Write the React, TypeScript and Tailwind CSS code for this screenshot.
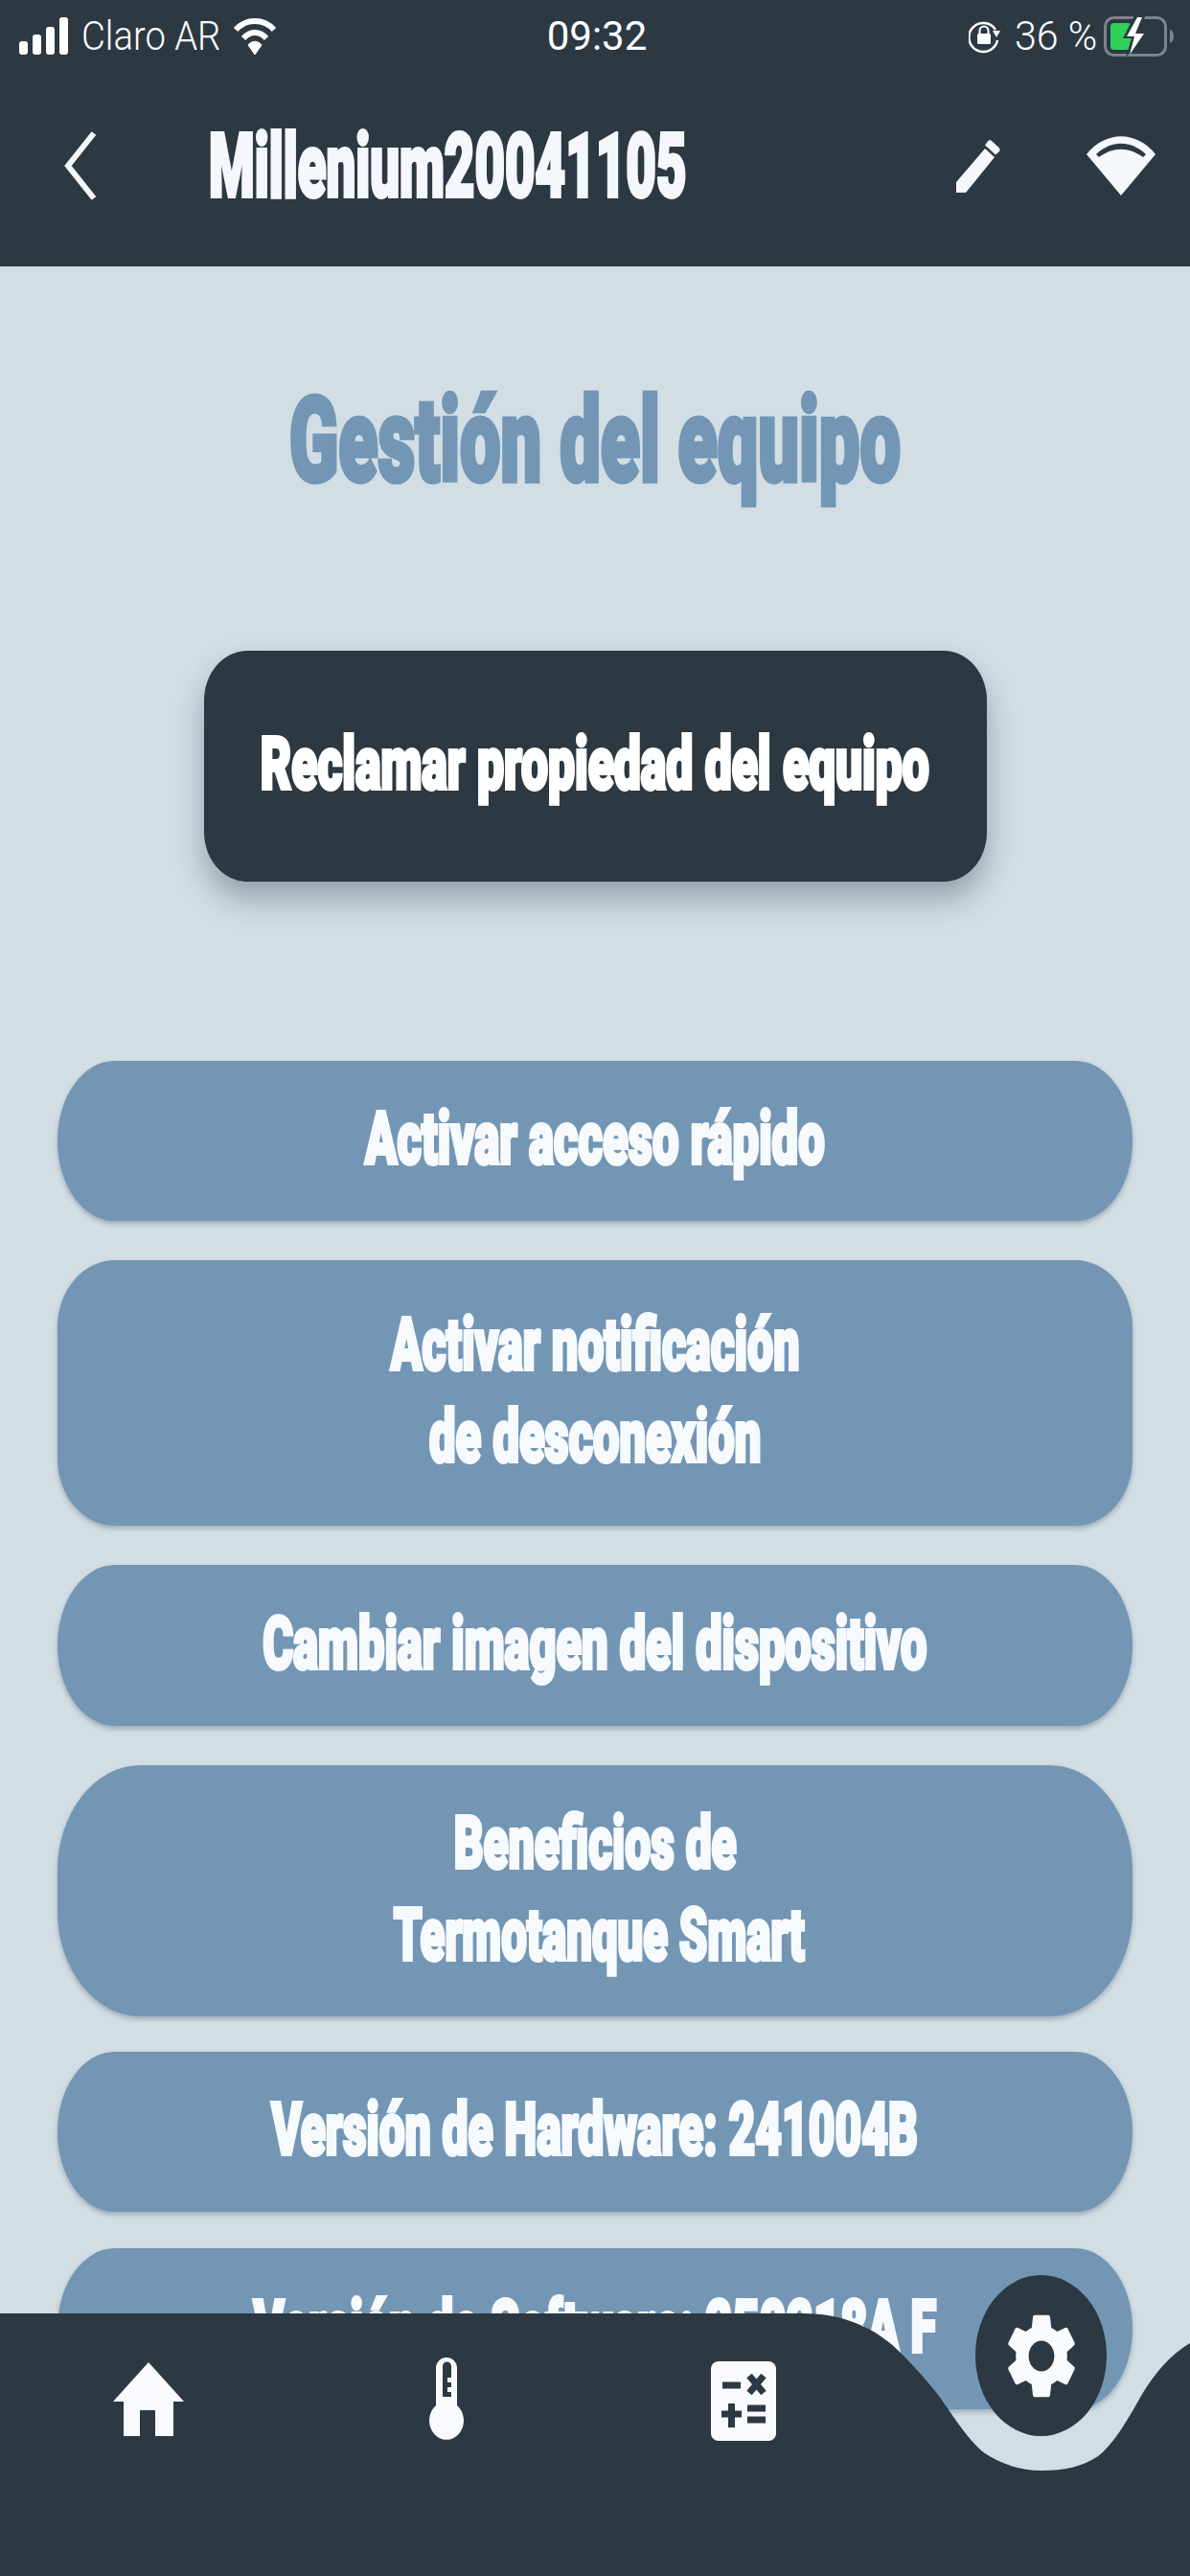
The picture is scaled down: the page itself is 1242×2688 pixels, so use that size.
import type { ReactNode } from 'react';

const display = 'inline-block whitespace-nowrap [font-family:Roboto,sans-serif] font-black';

function Line({ scale, children }: { scale: string; children: ReactNode }) {
  return (
    <span className="h-[96px] pb-[5px] flex items-center justify-center text-[76px] leading-none text-[#f7fafd] [-webkit-text-stroke:4px_#f7fafd]">
      <span className={`${display} ${scale}`}>{children}</span>
    </span>
  );
}

function MenuButton({ className, children }: { className: string; children: ReactNode }) {
  return (
    <div className={`flex flex-col items-center justify-center bg-[#7396b5] shadow-[0_3px_5px_rgba(40,60,80,0.3)] ${className}`}>
      {children}
    </div>
  );
}

function StatusBar() {
  return (
    <div className="grid grid-cols-[1fr_auto_1fr] items-center h-[75px] pl-[20px] pr-[16px] text-white [font-family:Roboto,sans-serif] font-light text-[42px]">
      <div className="flex items-center">
        <svg className="shrink-0" width="51" height="39" viewBox="0 0 51 39" fill="white">
          <rect x="0" y="25" width="9" height="14" rx="3" />
          <rect x="14" y="18" width="9" height="21" rx="3" />
          <rect x="28" y="10" width="9" height="29" rx="3" />
          <rect x="42" y="0" width="9" height="39" rx="3" />
        </svg>
        <span className="inline-block whitespace-nowrap w-[157px] ml-[14px] scale-x-[0.91] origin-left">Claro AR</span>
        <svg className="shrink-0 ml-[1px]" width="46" height="40" viewBox="0 0 46 40" fill="none" stroke="white">
          <path d="M3 13 C14 1 32 1 43 13" strokeWidth="6" />
          <path d="M11 22 C18 14 28 14 35 22" strokeWidth="6" />
          <path d="M16 29 C20 24 26 24 30 29 L23 39 Z" fill="white" strokeWidth="1" />
        </svg>
      </div>
      <span className="inline-block font-normal scale-x-[1.0]">09:32</span>
      <div className="flex items-center justify-end">
        <svg className="shrink-0" width="33" height="36" viewBox="0 0 33 36" fill="none" stroke="white" strokeWidth="2.5">
          <path d="M28 11 A15 15 0 1 0 30 22" />
          <path d="M25 12 L33 12 L29 19 Z" fill="white" strokeWidth="0" />
          <path d="M11.5 15 V12 A4.5 4.5 0 0 1 20.5 12 V15" strokeWidth="2" />
          <rect x="9" y="15" width="14" height="11" rx="1.5" fill="white" strokeWidth="0" />
        </svg>
        <span className="inline-block whitespace-nowrap w-[100px] ml-[15px] scale-x-[0.98] origin-left">36 %</span>
        <svg className="shrink-0 -ml-[7px]" width="74" height="44" viewBox="0 0 74 44" fill="none">
          <rect x="1.5" y="2.5" width="63" height="39" rx="9" stroke="#7d848c" strokeWidth="3" />
          <path d="M69 15 C72 16 73 19 73 22 C73 25 72 28 69 29 Z" fill="#7d848c" />
          <rect x="7" y="8" width="22" height="28" rx="4" fill="#30d158" />
          <path d="M32 0 L20 24 H29 L23 44 L45 17 H35 L44 0 Z" fill="#2c3842" />
          <path d="M35 2 L24 22 H32 L27 41 L42 19 H33 L40 2 Z" fill="white" />
        </svg>
      </div>
    </div>
  );
}

function Header() {
  return (
    <header className="h-[278px] bg-[#2c3842]">
      <StatusBar />
      <div className="flex items-center h-[130px] mt-[33px] pl-[67px] pr-[36px]">
        <svg className="shrink-0" width="34" height="72" viewBox="0 0 34 72" fill="none" stroke="#f4f7fb" strokeWidth="6">
          <path d="M31 2 L4 36 L31 70" />
        </svg>
        <div className="ml-[117px] flex-1 min-w-0">
          <span className={`${display} scale-x-[0.586] origin-left text-[93px] leading-none text-[#f4f7fb] [-webkit-text-stroke:4px_#f4f7fb]`}>
            Millenium20041105
          </span>
        </div>
        <svg className="shrink-0 mr-[90px]" width="46" height="55" viewBox="0 0 46 55" fill="#f4f7fb">
          <path d="M0 44 L30 9 L40 18 L10 55 H0 Z" />
          <path d="M33 1.5 Q35 -0.5 37 1 L44.5 8 Q46.5 10 45 12 L41 15.5 L30 5.5 Z" />
        </svg>
        <svg className="shrink-0" width="72" height="62" viewBox="0 0 72 62" fill="#f4f7fb">
          <path d="M0 19 C20 -6 52 -6 72 19 L36 62 Z" />
          <path d="M10 19 C26 4 46 4 62 19 L59 22 C44 11 28 11 13 22 Z" fill="#2c3842" />
        </svg>
      </div>
    </header>
  );
}

function BottomNav() {
  return (
    <nav className="absolute left-0 bottom-0 w-full h-[274px]">
      <svg className="absolute inset-0" width="1242" height="274" viewBox="0 0 1242 274" fill="#2c3842">
        <path d="M0 0 H838 C880 0 915 15 942 43 C960 62 975 78 989 99 C1003 120 1015 136 1028 146 C1045 157 1065 164 1087 164 C1110 164 1130 160 1146 149 C1165 134 1180 105 1191 86 C1205 62 1222 43 1242 31 V274 H0 Z" />
      </svg>
      <div className="relative grid grid-cols-4 items-start">
        <div className="flex justify-center pt-[51px]">
          <svg width="74" height="77" viewBox="0 0 74 77" fill="#f8fafd">
            <path d="M37 0 L74 41 H63 V77 H44 V50 H28 V77 H11 V41 H0 Z" />
          </svg>
        </div>
        <div className="flex justify-center pt-[46px]">
          <svg width="36" height="90" viewBox="0 0 36 90" fill="#f8fafd">
            <path fillRule="evenodd" d="M7 11 A11 11 0 0 1 29 11 V50 A18 20 0 1 1 7 50 Z M14 9 V41 H23 V36 H19 V31 H23 V26 H19 V21 H23 V9 A4.5 4.5 0 0 0 14 9 Z" />
          </svg>
        </div>
        <div className="flex justify-center pt-[50px]">
          <svg width="68" height="83" viewBox="0 0 68 83" fill="none">
            <rect width="68" height="83" rx="8" fill="#f8fafd" />
            <g stroke="#2c3842" strokeWidth="7">
              <path d="M12 25 H31" />
              <path d="M40 15 L55 33 M55 15 L40 33" />
              <path d="M11 55 H32 M21.5 44 V69" />
              <path d="M38 49 H57 M38 61 H57" />
            </g>
          </svg>
        </div>
        <div className="flex justify-center -mt-[40px]">
          <div className="flex items-center justify-center w-[137px] h-[168px] rounded-[50%] bg-[#2c3842]">
            <svg width="70" height="89" viewBox="2.6 2 18.8 20" preserveAspectRatio="none" fill="#f8fafd">
              <path d="M19.14 12.94c.04-.3.06-.61.06-.94 0-.32-.02-.64-.07-.94l2.03-1.58c.18-.14.23-.41.12-.61l-1.92-3.32c-.12-.22-.37-.29-.59-.22l-2.39.96c-.5-.38-1.03-.7-1.62-.94l-.36-2.54c-.04-.24-.24-.41-.48-.41h-3.84c-.24 0-.43.17-.47.41l-.36 2.54c-.59.24-1.13.57-1.62.94l-2.39-.96c-.22-.08-.47 0-.59.22L2.74 8.87c-.12.21-.08.47.12.61l2.03 1.58c-.05.3-.09.63-.09.94s.02.64.07.94l-2.03 1.58c-.18.14-.23.41-.12.61l1.92 3.32c.12.22.37.29.59.22l2.39-.96c.5.38 1.03.7 1.62.94l.36 2.54c.05.24.24.41.48.41h3.84c.24 0 .44-.17.47-.41l.36-2.54c.59-.24 1.13-.56 1.62-.94l2.39.96c.22.08.47 0 .59-.22l1.92-3.32c.12-.22.07-.47-.12-.61l-2.01-1.58zM12 15.6c-1.98 0-3.6-1.62-3.6-3.6s1.62-3.6 3.6-3.6 3.6 1.62 3.6 3.6-1.62 3.6-3.6 3.6z" />
            </svg>
          </div>
        </div>
      </div>
    </nav>
  );
}

export default function App() {
  return (
    <div className="relative w-[1242px] h-[2688px] overflow-hidden bg-[#d2dde4]">
      <Header />
      <main className="flex flex-col items-center">
        <h1 className={`${display} scale-x-[0.615] mt-[112px] h-[140px] leading-[140px] text-[123px] text-[#7396b5] [-webkit-text-stroke:5px_#7396b5]`}>
          Gestión del equipo
        </h1>
        <div className="flex items-center justify-center w-[817px] h-[241px] mt-[149px] pb-[5px] rounded-[45px/52px] bg-[#2c3842] shadow-[0_18px_30px_rgba(43,55,66,0.35)]">
          <span className={`${display} scale-x-[0.655] text-[76px] leading-none text-white [-webkit-text-stroke:4px_white]`}>
            Reclamar propiedad del equipo
          </span>
        </div>
        <div className="flex flex-col w-[1122px] mt-[187px] gap-[41px]">
          <MenuButton className="h-[167px] rounded-[60px/84px]">
            <Line scale="scale-x-[0.645]">Activar acceso rápido</Line>
          </MenuButton>
          <MenuButton className="h-[277px] rounded-[60px/70px]">
            <Line scale="scale-x-[0.635]">Activar notificación</Line>
            <Line scale="scale-x-[0.643]">de desconexión</Line>
          </MenuButton>
          <MenuButton className="h-[168px] rounded-[60px/84px]">
            <Line scale="scale-x-[0.641]">Cambiar imagen del dispositivo</Line>
          </MenuButton>
          <MenuButton className="h-[262px] rounded-[87px/110px]">
            <Line scale="scale-x-[0.63]">Beneficios de</Line>
            <Line scale="scale-x-[0.623] ml-[8px]">Termotanque Smart</Line>
          </MenuButton>
          <MenuButton className="h-[167px] -mt-[4px] rounded-[60px/84px]">
            <Line scale="scale-x-[0.63]">Versión de Hardware: 241004B</Line>
          </MenuButton>
          <MenuButton className="h-[168px] -mt-[3px] rounded-[60px/84px]">
            <Line scale="scale-x-[0.64]">Versión de Software: 250218A F</Line>
          </MenuButton>
        </div>
      </main>
      <BottomNav />
    </div>
  );
}
